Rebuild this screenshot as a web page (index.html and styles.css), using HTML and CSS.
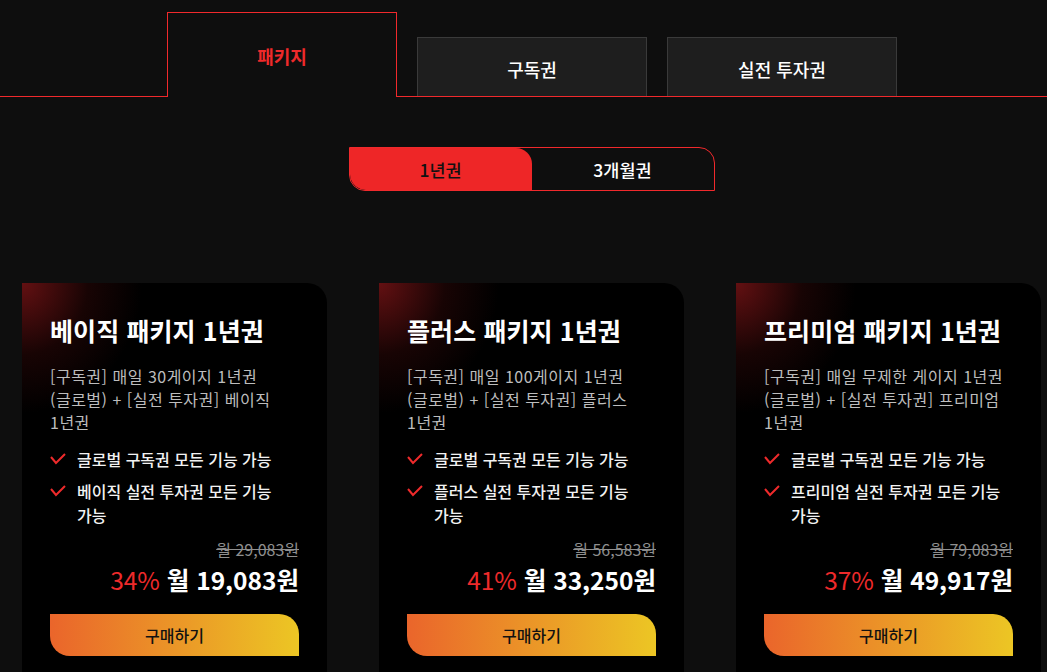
FILE: index.html
```html
<!DOCTYPE html>
<html lang="ko">
<head>
<meta charset="utf-8">
<link rel="stylesheet" href="styles.css">
</head>
<body>
<div class="tabbar">
  <div class="tabs">
    <div class="tab active">패키지</div>
    <div class="tab">구독권</div>
    <div class="tab">실전 투자권</div>
  </div>
</div>
<div class="page">
  <div class="toggle-wrap">
    <div class="toggle">
      <div class="opt on">1년권</div>
      <div class="opt">3개월권</div>
    </div>
  </div>
  <div class="cards">
    <div class="card">
      <h2 class="title">베이직 패키지 1년권</h2>
      <p class="desc">[구독권] 매일 30게이지 1년권<br>(글로벌) + [실전 투자권] 베이직<br>1년권</p>
      <ul class="feats">
        <li><svg class="chk" viewBox="0 0 16 12"><polyline points="1,4 6,10 15,1"/></svg><span>글로벌 구독권 모든 기능 가능</span></li>
        <li><svg class="chk" viewBox="0 0 16 12"><polyline points="1,4 6,10 15,1"/></svg><span>베이직 실전 투자권 모든 기능<br>가능</span></li>
      </ul>
      <div class="old">월 29,083원</div>
      <div class="price"><span class="pct">34%</span> 월 19,083원</div>
      <button class="buy">구매하기</button>
    </div>
    <div class="card">
      <h2 class="title">플러스 패키지 1년권</h2>
      <p class="desc">[구독권] 매일 100게이지 1년권<br>(글로벌) + [실전 투자권] 플러스<br>1년권</p>
      <ul class="feats">
        <li><svg class="chk" viewBox="0 0 16 12"><polyline points="1,4 6,10 15,1"/></svg><span>글로벌 구독권 모든 기능 가능</span></li>
        <li><svg class="chk" viewBox="0 0 16 12"><polyline points="1,4 6,10 15,1"/></svg><span>플러스 실전 투자권 모든 기능<br>가능</span></li>
      </ul>
      <div class="old">월 56,583원</div>
      <div class="price"><span class="pct">41%</span> 월 33,250원</div>
      <button class="buy">구매하기</button>
    </div>
    <div class="card">
      <h2 class="title">프리미엄 패키지 1년권</h2>
      <p class="desc">[구독권] 매일 무제한 게이지 1년권<br>(글로벌) + [실전 투자권] 프리미엄<br>1년권</p>
      <ul class="feats">
        <li><svg class="chk" viewBox="0 0 16 12"><polyline points="1,4 6,10 15,1"/></svg><span>글로벌 구독권 모든 기능 가능</span></li>
        <li><svg class="chk" viewBox="0 0 16 12"><polyline points="1,4 6,10 15,1"/></svg><span>프리미엄 실전 투자권 모든 기능<br>가능</span></li>
      </ul>
      <div class="old">월 79,083원</div>
      <div class="price"><span class="pct">37%</span> 월 49,917원</div>
      <button class="buy">구매하기</button>
    </div>
  </div>
</div>
</body>
</html>
```
FILE: styles.css
```css
* { box-sizing: border-box; }
html, body { margin: 0; padding: 0; }
body {
  background: #0e0e0e;
  color: #fff;
  font-family: "Noto Sans CJK KR", "Noto Sans", sans-serif;
  width: 1047px;
  height: 672px;
  overflow: hidden;
}
.tabbar {
  padding-top: 12px;
  border-bottom: 1px solid #f0292c;
}
.tabs {
  display: flex;
  align-items: flex-end;
  gap: 20px;
  margin-left: 167px;
}
.tab {
  width: 230px;
  height: 59px;
  background: #1e1e1e;
  border: 1px solid #3a3a3a;
  border-bottom: none;
  display: flex;
  align-items: center;
  justify-content: center;
  font-size: 18px;
  font-weight: 500;
  color: #fff;
  padding-top: 4px;
}
.tab.active {
  height: 85px;
  margin-bottom: -1px;
  background: #0e0e0e;
  border: 1px solid #f0292c;
  border-bottom: none;
  color: #ee2a2b;
  font-weight: 700;
  align-items: flex-start;
  padding-top: 30px;
}
.page {
  margin-left: 22px;
  width: 1019px;
}
.toggle-wrap {
  display: flex;
  justify-content: center;
  padding-top: 50px;
}
.toggle {
  display: flex;
  width: 366px;
  height: 44px;
  border: 1px solid #f0292c;
  border-radius: 0 16px 0 16px;
  overflow: hidden;
}
.opt {
  flex: 1;
  display: flex;
  align-items: center;
  justify-content: center;
  font-size: 17.5px;
  font-weight: 500;
  color: #fff;
}
.opt.on {
  background: #ee2627;
  color: #111;
  border-radius: 0 16px 0 16px;
}
.cards {
  display: flex;
  gap: 52px;
  margin-top: 92px;
}
.card {
  width: 305px;
  height: 400px;
  background: radial-gradient(ellipse 120px 130px at 0 0, rgba(110, 18, 20, 0.9), rgba(60, 10, 10, 0.4) 55%, rgba(0, 0, 0, 0) 100%), #000;
  border-radius: 0 20px 0 0;
  padding: 31px 28px 24px 28px;
  display: flex;
  flex-direction: column;
}
.title {
  margin: 0;
  font-size: 25px;
  letter-spacing: 0.1px;
  line-height: 32px;
  font-weight: 700;
  color: #fff;
}
.desc {
  margin: 19px 0 0 0;
  font-size: 16px;
  letter-spacing: 0.5px;
  line-height: 23px;
  color: #bdbdbd;
  white-space: nowrap;
}
.feats {
  list-style: none;
  margin: 13px 0 0 0;
  padding: 0;
  display: flex;
  flex-direction: column;
  gap: 8px;
}
.feats li {
  display: flex;
  align-items: flex-start;
  gap: 11px;
  font-size: 16px;
  line-height: 24px;
  font-weight: 500;
  color: #f2f2f2;
  white-space: nowrap;
}
.chk {
  width: 16px;
  height: 12px;
  margin-top: 6px;
  flex: none;
  fill: none;
  stroke: #ee2a2b;
  stroke-width: 2;
}
.old {
  margin-top: 12px;
  text-align: right;
  font-size: 16px;
  line-height: 20px;
  color: #8f8f8f;
  text-decoration: line-through;
}
.price {
  margin-top: 5px;
  text-align: right;
  font-size: 24.5px;
  line-height: 32px;
  font-weight: 700;
  color: #fff;
}
.pct {
  color: #ee2a2b;
  font-weight: 400;
}
.buy {
  margin-top: 18px;
  height: 42px;
  width: 100%;
  border: none;
  border-radius: 0 20px 0 20px;
  background: linear-gradient(90deg, #ea652b, #ecc624);
  font-family: inherit;
  font-size: 16px;
  font-weight: 500;
  color: #111;
  cursor: pointer;
}
```
